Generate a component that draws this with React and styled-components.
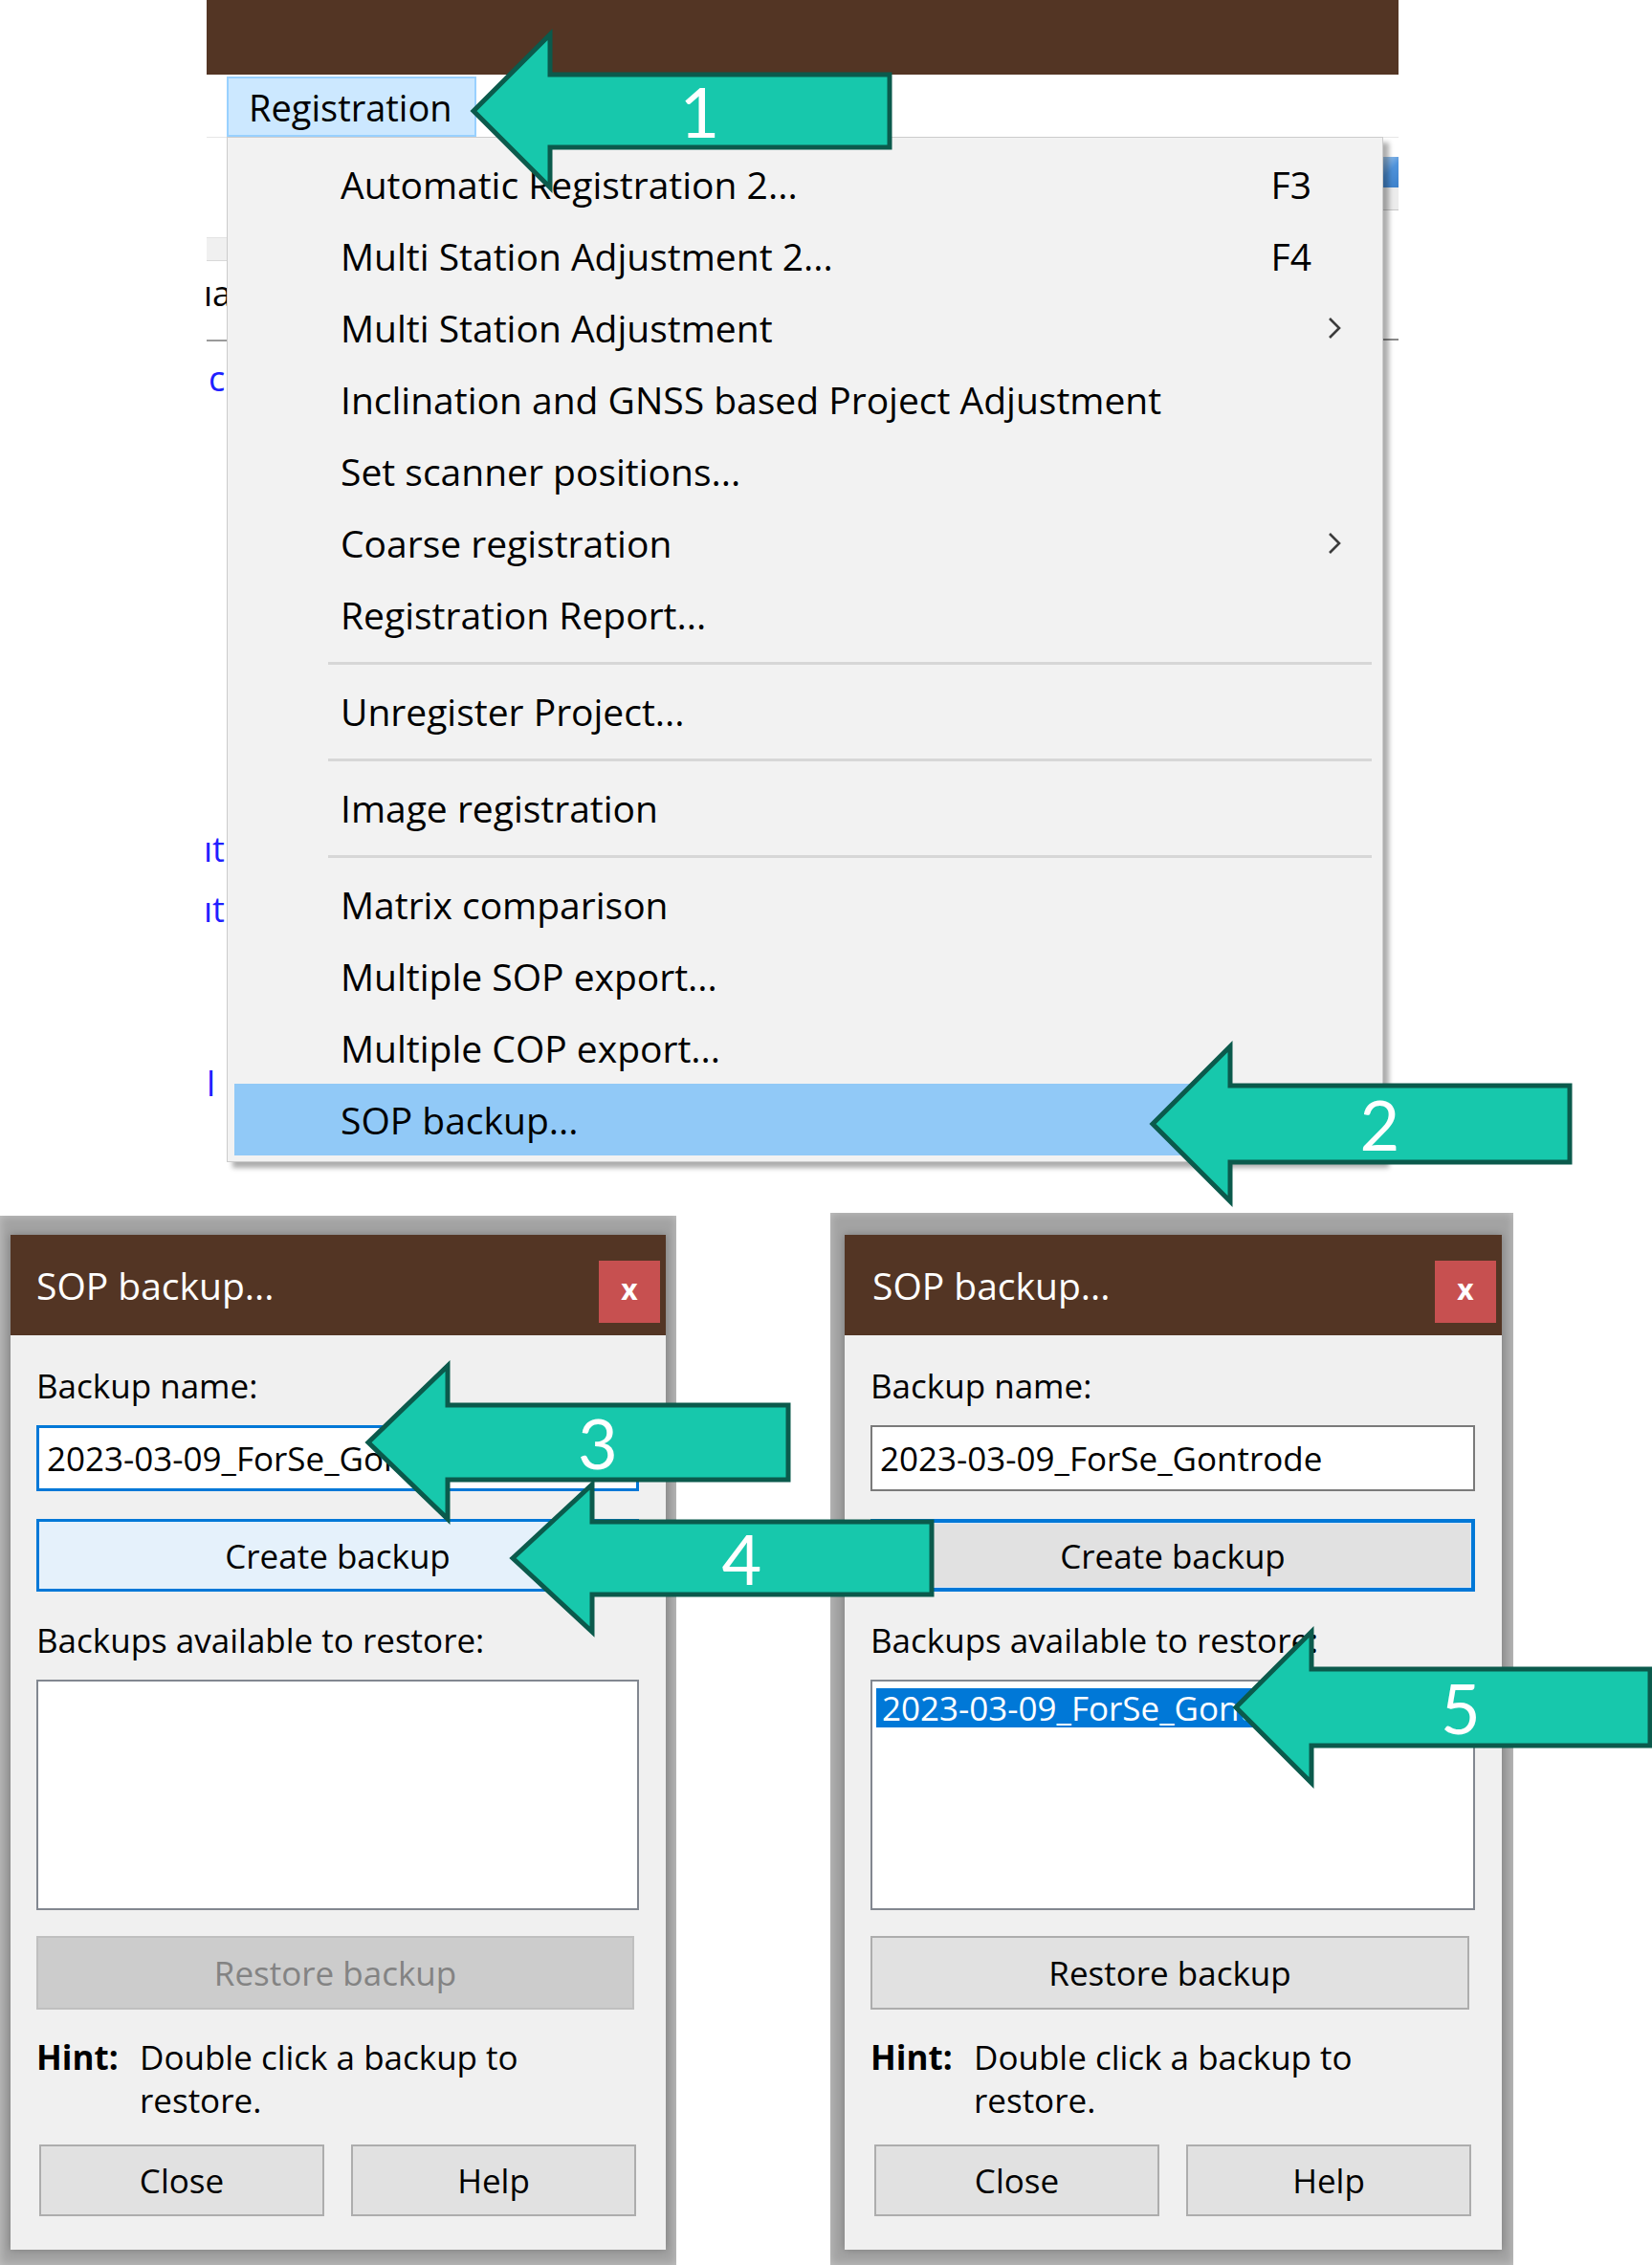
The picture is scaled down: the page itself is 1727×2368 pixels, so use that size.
import React from 'react'
import styled, { createGlobalStyle, css } from 'styled-components'

const UI_FONT = `'Open Sans', 'Noto Sans', 'DejaVu Sans', sans-serif`

const GlobalStyle = createGlobalStyle`
  html, body {
    margin: 0;
    padding: 0;
    background: #ffffff;
  }
  body {
    font-family: ${UI_FONT};
    color: #000;
  }
  * {
    box-sizing: border-box;
  }
`

const Page = styled.div`
  position: relative;
  width: 1727px;
  height: 2368px;
  overflow: hidden;
  background: #fff;
`

/* ---------- top shot: main window with the Registration menu open ---------- */

const TopScene = styled.div`
  height: 1268px;
  padding-left: 216px;
`

const AppWindow = styled.div`
  position: relative;
  width: 1246px;
  height: 1240px;
  display: flex;
  flex-direction: column;
  background: #fff;
`

const TitleStrip = styled.div`
  height: 78px;
  flex-shrink: 0;
  background: #533524;
`

const MenuBar = styled.div`
  height: 66px;
  flex-shrink: 0;
  display: flex;
  align-items: flex-start;
  padding: 2px 0 0 21px;
  border-bottom: 1px solid #e6e6e6;
`

const MenuTitle = styled.div`
  height: 63px;
  width: 261px;
  display: flex;
  align-items: center;
  padding-left: 21px;
  background: #cce8ff;
  border: 2px solid #99d1ff;
  font-size: 38px;
`

const WorkArea = styled.div`
  flex: 1;
  display: flex;
  justify-content: space-between;
`

const LeftPeek = styled.div`
  width: 21px;
  display: flex;
  flex-direction: column;
  align-items: flex-start;
`

const PeekBand = styled.div`
  flex-shrink: 0;
  width: 100%;
  height: 25px;
  margin-top: ${(p) => p.$gap}px;
  background: #f0f0f0;
  border-top: 1px solid #e3e3e3;
  border-bottom: 1px solid #d9d9d9;
`

const PeekRule = styled.div`
  flex-shrink: 0;
  width: 100%;
  height: 2px;
  margin-top: ${(p) => p.$gap}px;
  background: ${(p) => p.$color || '#9a9a9a'};
`

const PeekText = styled.div`
  flex-shrink: 0;
  white-space: nowrap;
  font-size: 36px;
  line-height: 38px;
  margin-top: ${(p) => p.$gap}px;
  margin-left: ${(p) => p.$ml || 0}px;
  color: ${(p) => (p.$blue ? '#2020ff' : '#000')};
`

const RightPeek = styled.div`
  width: 16px;
  display: flex;
  flex-direction: column;
`

const PeekTab = styled.div`
  height: 32px;
  margin-top: 20px;
  background: linear-gradient(135deg, #a9cdf0 0%, #4f93db 45%, #3b7fc9 100%);
`

const PeekPanel = styled.div`
  height: 24px;
  background: #ececec;
  border-bottom: 1px solid #c8c8c8;
`

/* dropdown menu (lies over the window content) */

const MenuList = styled.div`
  position: absolute;
  top: 143px;
  left: 21px;
  z-index: 2;
  width: 1209px;
  padding: 11px 11px 6px 7px;
  background: #f2f2f2;
  border: 1px solid #cccccc;
  box-shadow: 6px 6px 5px rgba(0, 0, 0, 0.32);
`

const MenuRow = styled.div`
  height: 75px;
  display: flex;
  align-items: center;
  padding: 0 32px 0 111px;
  font-size: 39px;
  white-space: nowrap;
  background: ${(p) => (p.$active ? '#91c9f7' : 'transparent')};
`

const Shortcut = styled.span`
  margin-left: auto;
  margin-right: 31px;
`

const SubArrow = styled.svg`
  margin-left: auto;
  width: 14px;
  height: 24px;
`

const MenuSeparator = styled.div`
  height: 26px;
  display: flex;
  align-items: center;
  padding-left: 98px;
  &::after {
    content: '';
    flex: 1;
    height: 3px;
    background: #d7d7d7;
  }
`

/* ---------- the two SOP backup dialogs ---------- */

const DialogRow = styled.div`
  display: flex;
  align-items: flex-start;
`

const DialogFrame = styled.div`
  margin-left: ${(p) => p.$ml}px;
  margin-top: ${(p) => p.$mt}px;
  padding: ${(p) => p.$pad};
  background: #a3a3a3;
  box-shadow: inset 0 0 10px rgba(255, 255, 255, 0.35);
`

const Dialog = styled.div`
  width: ${(p) => p.$w}px;
  display: flex;
  flex-direction: column;
  background: #f0f0f0;
  box-shadow: 0 0 8px rgba(0, 0, 0, 0.25);
`

const TitleBar = styled.div`
  height: 105px;
  display: flex;
  justify-content: space-between;
  align-items: flex-start;
  padding-left: ${(p) => p.$pl}px;
  background: #533524;
`

const TitleText = styled.span`
  color: #fff;
  font-size: 39px;
  line-height: 105px;
`

const CloseBox = styled.div`
  width: 64px;
  height: 65px;
  margin: 27px 6px 0 0;
  display: flex;
  align-items: center;
  justify-content: center;
  background: #c75050;
  color: #fff;
  font-size: 30px;
  font-weight: 700;
  line-height: 1;
  padding-bottom: 6px;
`

const Body = styled.div`
  display: flex;
  flex-direction: column;
  padding: 31px 28px 35px 27px;
  font-size: 35px;
`

const FieldLabel = styled.div`
  line-height: 44px;
  margin-top: ${(p) => p.$mt || 0}px;
`

const TextField = styled.div`
  height: 69px;
  margin-top: 19px;
  display: flex;
  align-items: center;
  padding-left: 8px;
  background: #fff;
  white-space: nowrap;
  overflow: hidden;
  border: ${(p) => (p.$focused ? '3px solid #0078d7' : '2px solid #7a7a7a')};
`

const WinButton = styled.div`
  height: ${(p) => p.$h}px;
  margin-top: ${(p) => p.$mt || 0}px;
  margin-right: ${(p) => p.$mr || 0}px;
  display: flex;
  align-items: center;
  justify-content: center;
  background: #e1e1e1;
  border: 2px solid #adadad;
  color: #000;
  white-space: nowrap;
  ${(p) =>
    p.$variant === 'hover' &&
    css`
      background: #e5f1fb;
      border: 3px solid #0078d7;
    `}
  ${(p) =>
    p.$variant === 'default' &&
    css`
      border: 4px solid #0078d7;
      box-shadow: inset 0 0 0 1px #d9e8f6;
    `}
  ${(p) =>
    p.$variant === 'disabled' &&
    css`
      background: #cccccc;
      border-color: #bfbfbf;
      color: #838383;
    `}
`

const ListBox = styled.div`
  height: 241px;
  margin-top: 19px;
  padding: 7px 4px;
  background: #fff;
  border: 2px solid #828790;
`

const ListItem = styled.div`
  line-height: 41px;
  padding-left: 6px;
  white-space: nowrap;
  background: #0078d7;
  color: #fff;
`

const HintRow = styled.div`
  display: grid;
  grid-template-columns: 108px 1fr;
  margin-top: 27px;
  line-height: 45px;
`

const HintLabel = styled.span`
  font-weight: 700;
`

const ButtonRow = styled.div`
  display: grid;
  grid-template-columns: 298px 298px;
  column-gap: 28px;
  margin-top: 24px;
  padding-left: ${(p) => p.$pl}px;
`

/* ---------- numbered callout arrows (overlay) ---------- */

const CalloutBox = styled.div`
  position: absolute;
  z-index: 5;
  left: ${(p) => p.$x}px;
  top: ${(p) => p.$y}px;
  width: ${(p) => p.$w}px;
  height: ${(p) => p.$h}px;
  pointer-events: none;
  svg {
    display: block;
    overflow: visible;
  }
`

const CalloutNumber = styled.span`
  position: absolute;
  left: ${(p) => p.$left}px;
  right: 0;
  top: ${(p) => p.$top}px;
  height: ${(p) => p.$h}px;
  display: flex;
  align-items: center;
  justify-content: center;
  padding-right: 42px;
  color: #fff;
  font-family: Lato, 'Open Sans', sans-serif;
  font-size: 72px;
  line-height: 1;
`

const CALLOUTS = [
  { n: '1', tx: 495, ty: 116, bx: 575, rx: 930, H: 80, S: 38 },
  { n: '2', tx: 1205, ty: 1175, bx: 1286, rx: 1641, H: 81, S: 40 },
  { n: '3', tx: 385, ty: 1508, bx: 468, rx: 824, H: 80, S: 39 },
  { n: '4', tx: 536, ty: 1629, bx: 619, rx: 974, H: 77, S: 38 },
  { n: '5', tx: 1292, ty: 1785, bx: 1371, rx: 1725, H: 79, S: 40 },
]

function Callout({ n, tx, ty, bx, rx, H, S }) {
  const w = rx - tx
  const h = H * 2
  const b = bx - tx
  const pts = [
    [0, H],
    [b, 0],
    [b, H - S],
    [w, H - S],
    [w, H + S],
    [b, H + S],
    [b, h],
  ]
    .map((p) => p.join(','))
    .join(' ')
  return (
    <CalloutBox $x={tx} $y={ty - H} $w={w} $h={h}>
      <svg width={w} height={h} viewBox={`0 0 ${w} ${h}`}>
        <polygon
          points={pts}
          fill="#17c8ac"
          stroke="#0b5a4c"
          strokeWidth="5"
          strokeLinejoin="miter"
        />
      </svg>
      <CalloutNumber $left={b} $top={H - S} $h={S * 2}>
        {n}
      </CalloutNumber>
    </CalloutBox>
  )
}

const MENU = [
  { label: 'Automatic Registration 2...', key: 'F3' },
  { label: 'Multi Station Adjustment 2...', key: 'F4' },
  { label: 'Multi Station Adjustment', sub: true },
  { label: 'Inclination and GNSS based Project Adjustment' },
  { label: 'Set scanner positions...' },
  { label: 'Coarse registration', sub: true },
  { label: 'Registration Report...' },
  { sep: true },
  { label: 'Unregister Project...' },
  { sep: true },
  { label: 'Image registration' },
  { sep: true },
  { label: 'Matrix comparison' },
  { label: 'Multiple SOP export...' },
  { label: 'Multiple COP export...' },
  { label: 'SOP backup...', active: true },
]

function Chevron() {
  return (
    <SubArrow viewBox="0 0 14 24">
      <polyline points="2,2 12,12 2,22" fill="none" stroke="#3c3c3c" strokeWidth="2.6" />
    </SubArrow>
  )
}

function RegistrationMenu() {
  return (
    <MenuList>
      {MENU.map((item, i) =>
        item.sep ? (
          <MenuSeparator key={i} />
        ) : (
          <MenuRow key={i} $active={item.active}>
            {item.label}
            {item.key && <Shortcut>{item.key}</Shortcut>}
            {item.sub && <Chevron />}
          </MenuRow>
        )
      )}
    </MenuList>
  )
}

function BackupDialog({ width, titlePad, hovered, selected, restoreGap }) {
  return (
    <Dialog $w={width}>
      <TitleBar $pl={titlePad}>
        <TitleText>SOP backup...</TitleText>
        <CloseBox>x</CloseBox>
      </TitleBar>
      <Body>
        <FieldLabel>Backup name:</FieldLabel>
        <TextField $focused={hovered}>2023-03-09_ForSe_Gontrode</TextField>
        <WinButton $h={76} $mt={29} $variant={hovered ? 'hover' : 'default'}>
          Create backup
        </WinButton>
        <FieldLabel $mt={29}>Backups available to restore:</FieldLabel>
        <ListBox>{selected && <ListItem>2023-03-09_ForSe_Gontrode</ListItem>}</ListBox>
        <WinButton $h={77} $mt={27} $mr={restoreGap} $variant={selected ? undefined : 'disabled'}>
          Restore backup
        </WinButton>
        <HintRow>
          <HintLabel>Hint:</HintLabel>
          <span>
            Double click a backup to
            <br />
            restore.
          </span>
        </HintRow>
        <ButtonRow $pl={selected ? 4 : 3}>
          <WinButton $h={75}>Close</WinButton>
          <WinButton $h={75}>Help</WinButton>
        </ButtonRow>
      </Body>
    </Dialog>
  )
}

export default function App() {
  return (
    <>
      <GlobalStyle />
      <Page>
        <TopScene>
          <AppWindow>
            <TitleStrip />
            <MenuBar>
              <MenuTitle>Registration</MenuTitle>
            </MenuBar>
            <WorkArea>
              <LeftPeek>
                <PeekBand $gap={104} />
                <PeekText $gap={15} $ml={-3}>
                  ıa
                </PeekText>
                <PeekRule $gap={29} />
                <PeekText $gap={20} $ml={2} $blue>
                  c
                </PeekText>
                <PeekText $gap={454} $ml={-3} $blue>
                  ıt
                </PeekText>
                <PeekText $gap={25} $ml={-3} $blue>
                  ıt
                </PeekText>
                <PeekText $gap={144} $ml={0} $blue>
                  l
                </PeekText>
              </LeftPeek>
              <RightPeek>
                <PeekTab />
                <PeekPanel />
                <PeekRule $gap={134} $color="#8a8a8a" />
              </RightPeek>
            </WorkArea>
            <RegistrationMenu />
          </AppWindow>
        </TopScene>

        <DialogRow>
          <DialogFrame $ml={0} $mt={3} $pad="20px 11px 16px 11px">
            <BackupDialog width={685} titlePad={27} hovered restoreGap={5} />
          </DialogFrame>
          <DialogFrame $ml={161} $mt={0} $pad="23px 12px 16px 15px">
            <BackupDialog width={687} titlePad={29} selected restoreGap={6} />
          </DialogFrame>
        </DialogRow>

        {CALLOUTS.map((c) => (
          <Callout key={c.n} {...c} />
        ))}
      </Page>
    </>
  )
}
